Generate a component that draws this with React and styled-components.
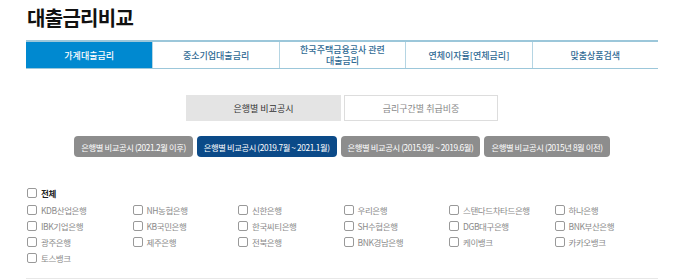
import React, { useState } from "react";
import styled, { createGlobalStyle } from "styled-components";

const GlobalStyle = createGlobalStyle`
  body {
    margin: 0;
    background: #fff;
    font-family: "Noto Sans CJK KR", "Noto Sans", sans-serif;
  }
`;

const Page = styled.div`
  width: 632px;
  padding: 4px 0 0 26px;
`;

const Title = styled.h1`
  margin: 0 0 0 1px;
  font-size: 20px;
  font-weight: 700;
  color: #111;
  line-height: 28px;
  letter-spacing: -0.7px;
`;

const TabBar = styled.div`
  display: grid;
  grid-template-columns: repeat(5, 1fr);
  margin-top: 8px;
  border-top: 2px solid #9cc7da;
  border-bottom: 1px solid #9cc7da;
  height: 26px;
`;

const Tab = styled.div`
  display: flex;
  align-items: center;
  justify-content: center;
  text-align: center;
  font-size: 9px;
  line-height: 11px;
  font-weight: 500;
  color: ${(p) => (p.$active ? "#fff" : "#2f6a94")};
  background: ${(p) => (p.$active ? "#0089d0" : "#fff")};
  border-left: ${(p) => (p.$first ? "none" : "1px solid #b5d5e3")};
`;

const SubTabs = styled.div`
  display: flex;
  justify-content: center;
  gap: 3px;
  margin-top: 26px;
`;

const SubTab = styled.div`
  width: ${(p) => (p.$active ? "155px" : "154px")};
  height: 26px;
  box-sizing: border-box;
  display: flex;
  align-items: center;
  justify-content: center;
  font-size: 9px;
  color: ${(p) => (p.$active ? "#333" : "#888")};
  background: ${(p) => (p.$active ? "#e4e4e4" : "#fff")};
  border: 1px solid ${(p) => (p.$active ? "#e4e4e4" : "#ddd")};
`;

const Periods = styled.div`
  display: flex;
  justify-content: center;
  gap: 4px;
  margin-top: 15px;
`;

const PeriodButton = styled.button`
  height: 21px;
  padding: 0 7px;
  border: none;
  border-radius: 4px;
  font-family: inherit;
  font-size: 8.3px;
  letter-spacing: -0.4px;
  color: #fff;
  background: ${(p) => (p.$active ? "#0b4a88" : "#8d8d8d")};
  cursor: pointer;
`;

const Banks = styled.div`
  margin-top: 30px;
  padding-left: 1px;
  padding-bottom: 15px;
  border-bottom: 1px solid #e8e8e8;
`;

const BankGrid = styled.div`
  display: grid;
  grid-template-columns: repeat(6, 105.5px);
  row-gap: 5px;
  margin-top: 6px;
`;

const Check = styled.label`
  display: flex;
  align-items: center;
  gap: 4px;
  height: 11px;
  font-size: 8.5px;
  letter-spacing: -0.4px;
  color: ${(p) => (p.$bold ? "#222" : "#8a8a8a")};
  font-weight: ${(p) => (p.$bold ? 700 : 400)};
`;

const Box = styled.span`
  width: 8px;
  height: 8px;
  border: 1px solid #999;
  border-radius: 2px;
  background: #fff;
  flex: none;
`;

const tabs = [
  "가계대출금리",
  "중소기업대출금리",
  "한국주택금융공사 관련\n대출금리",
  "연체이자율[연체금리]",
  "맞춤상품검색",
];

const periods = [
  "은행별 비교공시 (2021.2월 이후)",
  "은행별 비교공시 (2019.7월 ~ 2021.1월)",
  "은행별 비교공시 (2015.9월 ~ 2019.6월)",
  "은행별 비교공시 (2015년 8월 이전)",
];

const banks = [
  "KDB산업은행", "NH농협은행", "신한은행", "우리은행", "스탠다드차타드은행", "하나은행",
  "IBK기업은행", "KB국민은행", "한국씨티은행", "SH수협은행", "DGB대구은행", "BNK부산은행",
  "광주은행", "제주은행", "전북은행", "BNK경남은행", "케이뱅크", "카카오뱅크",
  "토스뱅크",
];

export default function App() {
  const [period, setPeriod] = useState(1);
  return (
    <Page>
      <GlobalStyle />
      <Title>대출금리비교</Title>
      <TabBar>
        {tabs.map((t, i) => (
          <Tab key={t} $active={i === 0} $first={i === 0}>
            <span style={{ whiteSpace: "pre-line" }}>{t}</span>
          </Tab>
        ))}
      </TabBar>
      <SubTabs>
        <SubTab $active>은행별 비교공시</SubTab>
        <SubTab>금리구간별 취급비중</SubTab>
      </SubTabs>
      <Periods>
        {periods.map((p, i) => (
          <PeriodButton key={p} $active={i === period} onClick={() => setPeriod(i)}>
            {p}
          </PeriodButton>
        ))}
      </Periods>
      <Banks>
        <Check $bold>
          <Box />
          전체
        </Check>
        <BankGrid>
          {banks.map((b) => (
            <Check key={b}>
              <Box />
              {b}
            </Check>
          ))}
        </BankGrid>
      </Banks>
    </Page>
  );
}
